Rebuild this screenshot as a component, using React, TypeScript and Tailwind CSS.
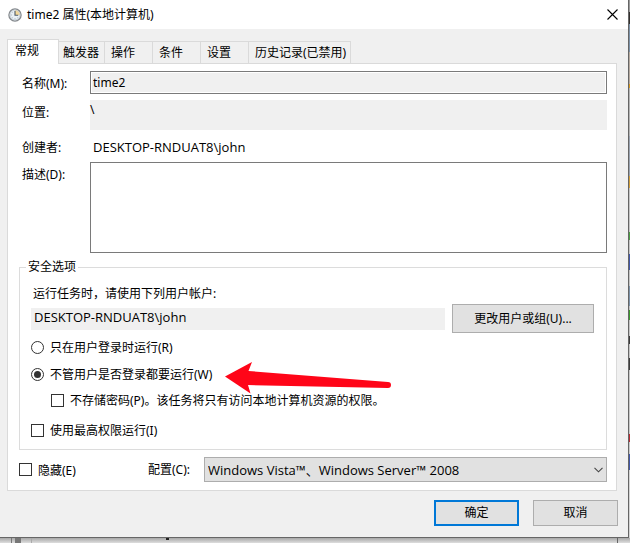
import { useState } from "react";
import type { ReactNode } from "react";

const tabs = [
  { name: "常规", width: "w-[52px]" },
  { name: "触发器", width: "w-[46px]" },
  { name: "操作", width: "w-[48px]" },
  { name: "条件", width: "w-[48px]" },
  { name: "设置", width: "w-[48px]" },
  { name: "历史记录(已禁用)", width: "w-[102px]" },
];

const backdrop = [
  { grow: "h-3", color: "bg-[#9b9b9b]" },
  { grow: "h-3", color: "bg-[#33302e]" },
  { grow: "h-7", color: "bg-[#7d92a8]" },
  { grow: "h-8", color: "bg-[#b5aaa0]" },
  { grow: "h-1", color: "bg-[#d99a20]" },
  { grow: "h-12", color: "bg-[#b4b4b4]" },
  { grow: "h-10", color: "bg-[#9aa3b0]" },
  { grow: "h-3", color: "bg-[#d3a03c]" },
  { grow: "h-11", color: "bg-[#c4c4c4]" },
  { grow: "h-2", color: "bg-[#4d9e45]" },
  { grow: "h-[14px]", color: "bg-[#c4c4c4]" },
  { grow: "h-4", color: "bg-[#4157a8]" },
  { grow: "h-4", color: "bg-[#c4c4c4]" },
  { grow: "h-5", color: "bg-[#7d92a8]" },
  { grow: "h-1", color: "bg-[#c4c4c4]" },
  { grow: "h-[10px]", color: "bg-[#3c9a2e]" },
  { grow: "h-4", color: "bg-[#c4c4c4]" },
  { grow: "h-2", color: "bg-[#3c3c3c]" },
  { grow: "h-[14px]", color: "bg-[#c4c4c4]" },
  { grow: "h-3", color: "bg-[#3c3c3c]" },
  { grow: "h-16", color: "bg-[#c8c8c8]" },
  { grow: "h-2", color: "bg-[#b72a33]" },
  { grow: "h-3", color: "bg-[#c8c8c8]" },
  { grow: "h-4", color: "bg-[#4157a8]" },
  { grow: "flex-1", color: "bg-[#d4d4d4]" },
];

function ClockIcon() {
  return (
    <svg className="size-[14px] shrink-0" viewBox="0 0 14 14" aria-hidden="true">
      <circle cx="7" cy="7" r="6.1" fill="#e9f0f5" stroke="#85898d" strokeWidth="1.3" />
      <path d="M7 7V2.1A4.9 4.9 0 0 1 11.9 7Z" fill="#f2d79a" />
      <circle cx="7" cy="7" r="4.9" fill="none" stroke="#b9c3cb" strokeWidth="0.7" />
      <path d="M7 3v4.3h3.2" fill="none" stroke="#4c5964" strokeWidth="1.1" />
      <path d="M3 7h.8M7 10.3v.8M4.3 4.3l.5.5M4.3 9.7l.5-.5M9.7 9.7l-.5-.5" stroke="#8a97a1" strokeWidth="0.7" />
    </svg>
  );
}

function Arrow() {
  return (
    <svg className="absolute -top-1 left-[194px] h-[34px] w-[168px]" viewBox="0 0 168 34" aria-hidden="true">
      <path
        d="M0 16.5 27 2 23.500 11 163 22a3 3 0 0 1 0 6L23 25 25.500 33.500Z"
        fill="#ff0518"
      />
    </svg>
  );
}

function CheckBox({ children }: { children: ReactNode }) {
  return (
    <label className="flex h-5 items-center gap-[6px] whitespace-nowrap">
      <input
        type="checkbox"
        className="size-[13px] shrink-0 appearance-none border border-[#333] bg-white checked:bg-[#333]"
      />
      <span className="pt-[2px]">{children}</span>
    </label>
  );
}

function Radio({ children, checked, onChange }: { children: ReactNode; checked: boolean; onChange: () => void }) {
  return (
    <label className="flex h-5 items-center gap-[6px] whitespace-nowrap">
      <input
        type="radio"
        name="logon"
        checked={checked}
        onChange={onChange}
        className="size-[13px] shrink-0 appearance-none rounded-full border border-[#333] bg-white bg-clip-content p-[2px] checked:bg-[#333]"
      />
      <span className="pt-[2px]">{children}</span>
    </label>
  );
}

export default function App() {
  const [always, setAlways] = useState(true);

  return (
    <div className="font-['Noto_Sans','Noto_Sans_CJK_SC',sans-serif] text-[12px] leading-4 text-black">
      <div className="flex">
        <main className="min-w-0 flex-1 border-r border-b border-[#666] bg-[#f0f0f0]">
          <header className="flex h-[29px] items-center bg-white pr-[10px] pl-2">
            <ClockIcon />
            <h1 className="ml-[5px] flex-1">time2 属性(本地计算机)</h1>
            <button type="button" aria-label="关闭" className="flex size-[11px] items-center justify-center">
              <svg className="size-[11px]" viewBox="0 0 11 11" aria-hidden="true">
                <path d="m.5.5 10 10m0-10-10 10" stroke="#000" strokeWidth="1.1" />
              </svg>
            </button>
          </header>

          <div className="pt-[10px] pr-[11px] pl-[7px]">
            <div role="tablist" className="flex items-end">
              {tabs.map((tab, i) => (
                <button
                  key={tab.name}
                  type="button"
                  role="tab"
                  aria-selected={i === 0}
                  className={`${tab.width} shrink-0 border-t border-r border-[#dadada] text-left whitespace-nowrap ${
                    i === 0 ? "-mb-px h-[25px] border-l bg-white pb-[2px] pl-[7px]" : i === 1 ? "h-[22px] pl-1" : "h-[22px] pl-[6px]"
                  }`}
                >
                  {tab.name}
                </button>
              ))}
            </div>

            <section className="border border-[#dadada] bg-white pt-[7px] pr-[9px] pb-2 pl-[11px]">
              <div className="flex h-[23px] items-center pl-[3px]">
                <label htmlFor="name" className="w-[68px] shrink-0 pt-[2px]">名称(M):</label>
                <input
                  id="name"
                  readOnly
                  defaultValue="time2"
                  className="h-[23px] min-w-0 flex-1 border border-[#7a7a7a] bg-[#f0f0f0] px-[2px] shadow-[inset_0_0_0_1px_#fff]"
                />
              </div>
              <div className="mt-[6px] flex h-[30px] pl-[3px]">
                <span className="w-[68px] shrink-0 pt-[5px]">位置:</span>
                <span className="flex-1 bg-[#f0f0f0] pt-[2px]">\</span>
              </div>
              <div className="mt-[10px] flex h-4 pl-[3px]">
                <span className="w-[71px] shrink-0">创建者:</span>
                <span className="-mt-px font-['Open_Sans','Noto_Sans_CJK_SC',sans-serif] text-[13px]">DESKTOP-RNDUAT8\john</span>
              </div>
              <div className="mt-[6px] flex pl-[3px]">
                <label htmlFor="description" className="w-[68px] shrink-0 pt-[5px]">描述(D):</label>
                <textarea id="description" className="block h-[91px] min-w-0 flex-1 resize-none border border-[#7a7a7a] bg-white p-[2px]" />
              </div>

              <fieldset className="mt-[6px] min-w-0 border border-[#dcdcdc] pr-3 pb-[9px] pl-[11px]">
                <legend className="-ml-[5px] px-[2px]">安全选项</legend>
                <p className="mt-[11px] pl-[2px]">运行任务时，请使用下列用户帐户:</p>
                <div className="mt-[2px] flex items-center gap-[7px]">
                  <span className="h-[22px] flex-1 bg-[#f0f0f0] pt-px pl-[3px] font-['Open_Sans','Noto_Sans_CJK_SC',sans-serif] text-[13px]">
                    DESKTOP-RNDUAT8\john
                  </span>
                  <button type="button" className="h-[29px] w-[142px] border border-[#adadad] bg-[#e1e1e1]">
                    更改用户或组(U)...
                  </button>
                </div>
                <div className="mt-1">
                  <Radio checked={!always} onChange={() => setAlways(false)}>只在用户登录时运行(R)</Radio>
                </div>
                <div className="relative mt-[7px]">
                  <Radio checked={always} onChange={() => setAlways(true)}>不管用户是否登录都要运行(W)</Radio>
                  <Arrow />
                </div>
                <div className="mt-[6px] pl-5">
                  <CheckBox>不存储密码(P)。该任务将只有访问本地计算机资源的权限。</CheckBox>
                </div>
                <div className="mt-[10px]">
                  <CheckBox>使用最高权限运行(I)</CheckBox>
                </div>
              </fieldset>

              <div className="mt-[7px] flex h-[25px] items-center">
                <div className="w-[129px] shrink-0">
                  <CheckBox>隐藏(E)</CheckBox>
                </div>
                <label htmlFor="config" className="w-14 shrink-0 pt-px">配置(C):</label>
                <div className="relative min-w-0 flex-1">
                  <select
                    id="config"
                    className="block h-[25px] w-full appearance-none border border-[#adadad] bg-[#e1e1e1] pl-[3px] font-['Open_Sans','Noto_Sans_CJK_SC',sans-serif] text-[13px]"
                  >
                    <option>Windows Vista™、Windows Server™ 2008</option>
                  </select>
                  <svg className="pointer-events-none absolute top-[10px] right-1 h-[6px] w-[9px]" viewBox="0 0 9 6" aria-hidden="true">
                    <path d="m.5.8 4 4 4-4" fill="none" stroke="#444" strokeWidth="1.1" />
                  </svg>
                </div>
              </div>
            </section>
          </div>

          <footer className="flex justify-end gap-[14px] pt-[9px] pr-[10px] pb-[11px]">
            <button type="button" className="h-[26px] w-[85px] border-2 border-[#0078d7] bg-[#e1e1e1]">确定</button>
            <button type="button" className="h-[26px] w-[85px] border border-[#adadad] bg-[#e1e1e1]">取消</button>
          </footer>
        </main>
        <div className="flex w-px flex-col" aria-hidden="true">
          {backdrop.map((part, i) => (
            <div key={i} className={`${part.grow} ${part.color}`} />
          ))}
        </div>
      </div>
      <div className="flex h-[5px] bg-linear-to-b from-[#a8a8a8] to-[#dedede]" aria-hidden="true">
        <div className="mr-[3px] ml-[11px] w-px bg-[#777]" />
        <div className="w-[6px] bg-[#777]" />
        <div className="mr-[134px] ml-[10px] w-px bg-[#aaa]" />
        <div className="h-[2px] w-[3px] bg-[#222]" />
        <div className="flex-1" />
        <div className="mr-[12px] w-px bg-[#666]" />
      </div>
    </div>
  );
}
